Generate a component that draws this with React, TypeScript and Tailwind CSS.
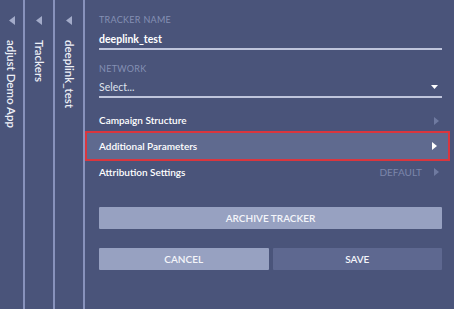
const crumbs = ['adjust Demo App', 'Trackers', 'deeplink_test']

function LeftTri() {
  return (
    <svg width="6" height="9" viewBox="0 0 6 9" className="block">
      <path d="M6 0 L0 4.5 L6 9 Z" fill="#a3abc9" />
    </svg>
  )
}

function RightTri({ color }: { color: string }) {
  return (
    <svg width="5" height="8" viewBox="0 0 5 8" className="block">
      <path d="M0 0 L5 4 L0 8 Z" fill={color} />
    </svg>
  )
}

export default function App() {
  return (
    <div
      className="flex h-[309px] w-[454px] overflow-hidden bg-[#4a547a] text-white"
      style={{ fontFamily: 'Lato, "Open Sans", sans-serif' }}
    >
      {crumbs.map((c, i) => (
        <div
          key={c}
          className={`flex h-full shrink-0 flex-col items-center border-r-2 border-[#8892bc] pt-[16px] ${i === 0 ? 'w-[25px]' : 'w-[30px]'}`}
        >
          <LeftTri />
          <div className="mt-[15px] text-[11.5px] font-semibold leading-none text-[#eef0f7] [writing-mode:vertical-rl]">
            {c}
          </div>
        </div>
      ))}

      <div className="flex flex-1 flex-col">
        <div className="px-[14px] pr-[12px] pt-[14px]">
          <div className="text-[9px] leading-[12px] uppercase tracking-[0.3px] text-[#8590b4]">Tracker Name</div>
          <div className="mt-[6px] border-b-2 border-[#bfc5dc] pb-[2px] text-[10.5px] font-bold leading-[14px] text-white">
            deeplink_test
          </div>
          <div className="mt-[13px] text-[9px] leading-[12px] uppercase tracking-[0.3px] text-[#8590b4]">Network</div>
          <div className="mt-[5px] flex items-center justify-between border-b-2 border-[#bfc5dc] pb-[2px] text-[10.5px] leading-[14px] text-[#dfe3ee]">
            <span>Select...</span>
            <svg width="7" height="4" viewBox="0 0 7 4" className="mr-[4px]">
              <path d="M0 0 L7 0 L3.5 4 Z" fill="#ffffff" />
            </svg>
          </div>
        </div>

        <div className="mt-[12px] flex h-[21px] items-center justify-between pl-[14px] pr-[15px] text-[10px] font-semibold">
          <span>Campaign Structure</span>
          <RightTri color="#6f7aa0" />
        </div>
        <div className="mr-[4px] flex h-[30px] items-center justify-between border-2 border-[#d9363e] bg-[#5f6a8f] pl-[12px] pr-[11px] text-[10px] font-semibold">
          <span>Additional Parameters</span>
          <RightTri color="#ffffff" />
        </div>
        <div className="flex h-[22px] items-center justify-between pl-[14px] pr-[15px] text-[10px] font-semibold">
          <span>Attribution Settings</span>
          <div className="flex items-center gap-[12px]">
            <span className="text-[10px] font-normal text-[#7c86aa]">DEFAULT</span>
            <RightTri color="#6f7aa0" />
          </div>
        </div>

        <div className="px-[14px] pr-[12px] pt-[24px]">
          <button className="flex h-[22px] w-full items-center justify-center rounded-[1px] bg-[#97a1c1] text-[10px] font-semibold text-[#f4f5fa]">
            ARCHIVE TRACKER
          </button>
          <div className="mt-[19px] flex gap-[4px]">
            <button className="flex h-[22px] flex-1 items-center justify-center rounded-[1px] bg-[#97a1c1] text-[10px] font-semibold text-[#f4f5fa]">
              CANCEL
            </button>
            <button className="flex h-[22px] flex-1 items-center justify-center rounded-[1px] bg-[#5e6890] text-[10px] font-semibold text-[#f4f5fa]">
              SAVE
            </button>
          </div>
        </div>
      </div>
    </div>
  )
}
